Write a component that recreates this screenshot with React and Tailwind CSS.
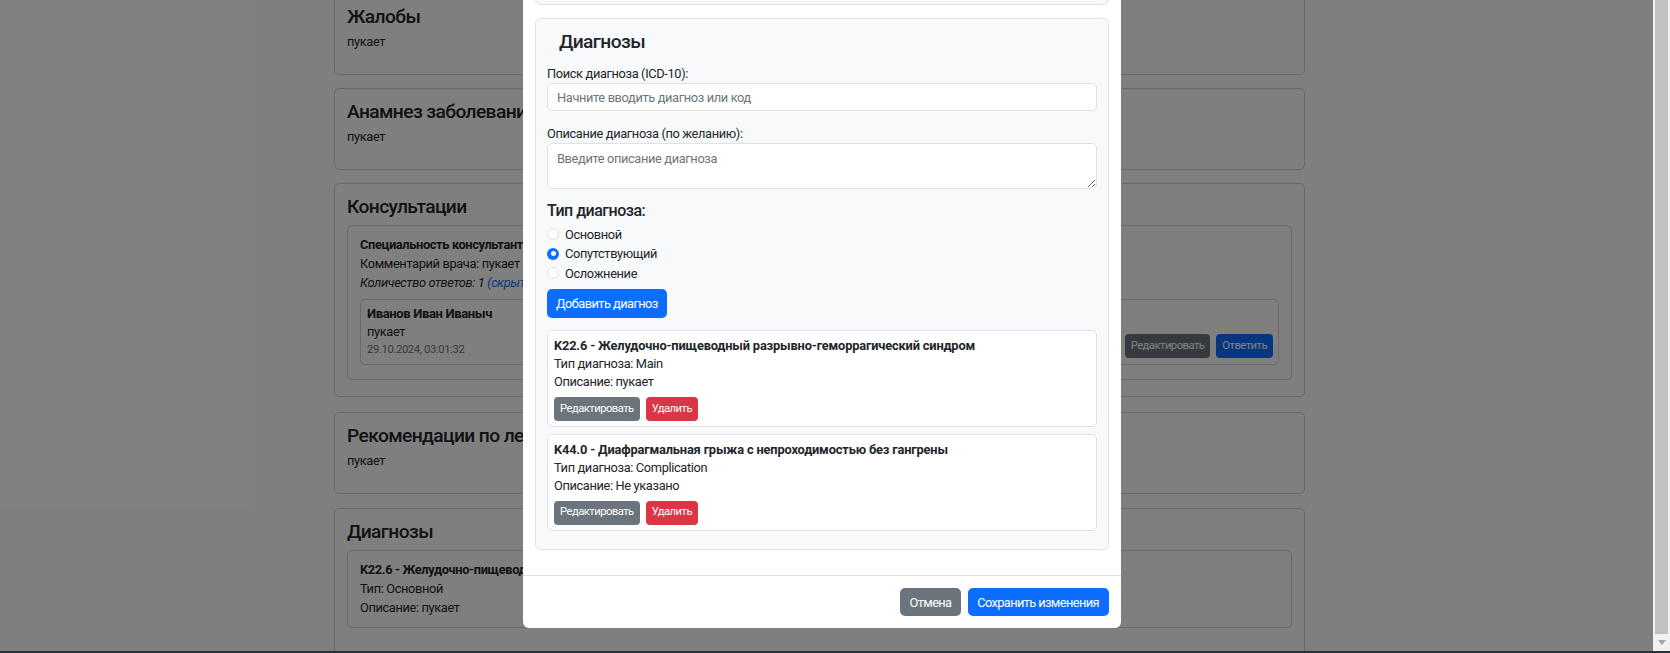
import React from "react";

const font = "font-['Segoe_UI',Roboto,'Liberation_Sans',sans-serif]";

const PageCard = ({ title, children, className = "" }) => (
	<div className={`bg-white border border-[#d2d2d2] rounded-[5px] px-[12px] pt-[11px] ${className}`}>
		<h4 className="text-[19.2px] font-medium leading-[23px] tracking-[-0.6px] text-[#212529]">{title}</h4>
		{children}
	</div>
);

const Radio = ({ label, checked }) => (
	<label className="flex items-center h-[19.5px] text-[12.8px] text-[#212529]">
		{checked ? (
			<span className="w-[12px] h-[12px] rounded-full bg-[#0d6efd] flex items-center justify-center">
				<span className="w-[5px] h-[5px] rounded-full bg-white" />
			</span>
		) : (
			<span className="w-[12px] h-[12px] rounded-full bg-white border border-[#dee2e6]" />
		)}
		<span className="ml-[6px]">{label}</span>
	</label>
);

const smallBtn = "h-[24px] px-[6px] text-white text-[11.2px] tracking-[-0.5px] rounded-[4px]";

const DiagnosisItem = ({ title, type, description, className = "" }) => (
	<div className={`bg-white border border-[#dee2e6] rounded-[5px] px-[6px] pt-[6px] pb-[5px] ${className}`}>
		<div className="text-[12.8px] leading-[18px] font-bold tracking-[-0.15px] text-[#212529]">{title}</div>
		<div className="text-[12.8px] leading-[18px] text-[#212529]">Тип диагноза: {type}</div>
		<div className="text-[12.8px] leading-[18px] text-[#212529]">Описание: {description}</div>
		<div className="flex gap-[6px] mt-[6px]">
			<button className={`${smallBtn} bg-[#6c757d]`}>Редактировать</button>
			<button className={`${smallBtn} bg-[#dc3545]`}>Удалить</button>
		</div>
	</div>
);

export default function App() {
	return (
		<div className={`${font} tracking-[-0.35px] w-[1670px] h-[653px] overflow-hidden flex flex-col bg-white`}>
			<div className="flex h-[651px]">
				<div className="relative flex-1 overflow-hidden bg-white">
					{/* page behind the modal */}
					<div className="ml-[334px] w-[971px] mt-[-7px]">
						<PageCard title="Жалобы" className="pb-[22.5px] mb-[13.5px]">
							<p className="mt-[4px] text-[12.8px] leading-[19px] text-[#212529]">пукает</p>
						</PageCard>
						<PageCard title="Анамнез заболевания" className="pb-[22.5px] mb-[13.5px]">
							<p className="mt-[4px] text-[12.8px] leading-[19px] text-[#212529]">пукает</p>
						</PageCard>
						<PageCard title="Консультации" className="pb-[16px] mb-[15.5px]">
							<div className="mt-[6.5px] border border-[#d2d2d2] rounded-[5px] px-[12px] pt-[9.5px] pb-[14px] text-[12.8px] leading-[19px] text-[#212529]">
								<div className="font-bold">Специальность консультанта: Гастроэнтеролог</div>
								<div>Комментарий врача: пукает</div>
								<div className="italic">
									Количество ответов: 1 <span className="text-[#0d6efd]">(скрыть ответы)</span>
								</div>
								<div className="mt-[6.5px] border border-[#d2d2d2] rounded-[5px] pl-[6px] pr-[5px] pt-[4.5px] pb-[6px] flex justify-between items-end">
									<div>
										<div className="font-bold text-[13px] leading-[19px]">Иванов Иван Иваныч</div>
										<div className="leading-[17.5px]">пукает</div>
										<div className="text-[11.2px] leading-[17px] text-[#6c757d]">29.10.2024, 03:01:32</div>
									</div>
									<div className="flex gap-[6px]">
										<button className={`${smallBtn} bg-[#6c757d]`}>Редактировать</button>
										<button className={`${smallBtn} bg-[#0d6efd]`}>Ответить</button>
									</div>
								</div>
							</div>
						</PageCard>
						<PageCard title="Рекомендации по лечению" className="pb-[22.5px] mb-[14.5px]">
							<p className="mt-[4px] text-[12.8px] leading-[19px] text-[#212529]">пукает</p>
						</PageCard>
						<PageCard title="Диагнозы" className="pb-[40px]">
							<div className="mt-[6.5px] border border-[#d2d2d2] rounded-[5px] px-[12px] pt-[9.5px] pb-[9.5px] text-[12.8px] leading-[19px] text-[#212529]">
								<div className="font-bold">K22.6 - Желудочно-пищеводный разрывно-геморрагический синдром</div>
								<div>Тип: Основной</div>
								<div>Описание: пукает</div>
							</div>
						</PageCard>
					</div>

					{/* backdrop + modal */}
					<div className="absolute inset-0 bg-black/50">
						<div className="ml-[523px] mt-[-70px] w-[598px] bg-white rounded-b-[6px]">
							<div className="px-[12px] pt-[13px] pb-[12.5px]">
								<div className="h-[62px] bg-[#f8f9fa] border border-[#dee2e6] rounded-[6px] mb-[13px]" />
								<div className="bg-[#f8f9fa] border border-[#dee2e6] rounded-[6px] px-[11px] pt-[11px] pb-[18px] mb-[12.5px]">
									<h4 className="pl-[12px] text-[19.2px] font-medium leading-[23px] tracking-[-0.6px] text-[#212529] mb-[11px]">Диагнозы</h4>
									<label className="block text-[12.8px] leading-[19px] text-[#212529]">Поиск диагноза (ICD-10):</label>
									<input
										className="block w-full h-[28px] bg-white border border-[#dee2e6] rounded-[5px] px-[9px] text-[12.8px] text-[#212529] placeholder:text-[#6c757d] outline-none"
										placeholder="Начните вводить диагноз или код"
									/>
									<label className="block mt-[12.5px] text-[12.8px] leading-[19px] text-[#212529]">Описание диагноза (по желанию):</label>
									<textarea
										className="block w-full h-[46px] bg-white border border-[#dee2e6] rounded-[5px] px-[9px] pt-[5px] text-[12.8px] leading-[19px] text-[#212529] placeholder:text-[#6c757d] outline-none"
										placeholder="Введите описание диагноза"
									/>
									<h5 className="mt-[12px] text-[16px] font-medium leading-[19.2px] tracking-[-0.5px] text-[#212529]">Тип диагноза:</h5>
									<div className="mt-[5px] flex flex-col">
										<Radio label="Основной" />
										<Radio label="Сопутствующий" checked />
										<Radio label="Осложнение" />
									</div>
									<button className="mt-[5.5px] h-[29px] px-[9px] bg-[#0d6efd] text-white text-[12.8px] tracking-[-0.55px] rounded-[5px]">Добавить диагноз</button>
									<DiagnosisItem
										className="mt-[12.5px]"
										title="K22.6 - Желудочно-пищеводный разрывно-геморрагический синдром"
										type="Main"
										description="пукает"
									/>
									<DiagnosisItem
										className="mt-[6.5px]"
										title="K44.0 - Диафрагмальная грыжа с непроходимостью без гангрены"
										type="Complication"
										description="Не указано"
									/>
								</div>
							</div>
							<div className="border-t border-[#dee2e6] flex justify-end gap-[6.5px] px-[12.5px] pt-[12.5px] pb-[12px]">
								<button className="h-[28px] px-[9.6px] bg-[#6c757d] text-white text-[12.8px] tracking-[-0.6px] rounded-[5px]">Отмена</button>
								<button className="h-[28px] px-[9.6px] bg-[#0d6efd] text-white text-[12.8px] tracking-[-0.6px] rounded-[5px]">Сохранить изменения</button>
							</div>
						</div>
					</div>
				</div>

				{/* window scrollbar */}
				<div className="w-[17px] bg-[#f1f1f1] flex flex-col">
					<div className="h-[634px] mx-[2px] bg-[#c1c1c1]" />
					<div className="flex-1 flex items-center justify-center">
						<svg width="8" height="5" viewBox="0 0 8 5">
							<path d="M0 0 H8 L4 5 Z" fill="#a3a3a3" />
						</svg>
					</div>
				</div>
			</div>
			<div className="h-[2px] bg-[#27313a]" />
		</div>
	);
}
